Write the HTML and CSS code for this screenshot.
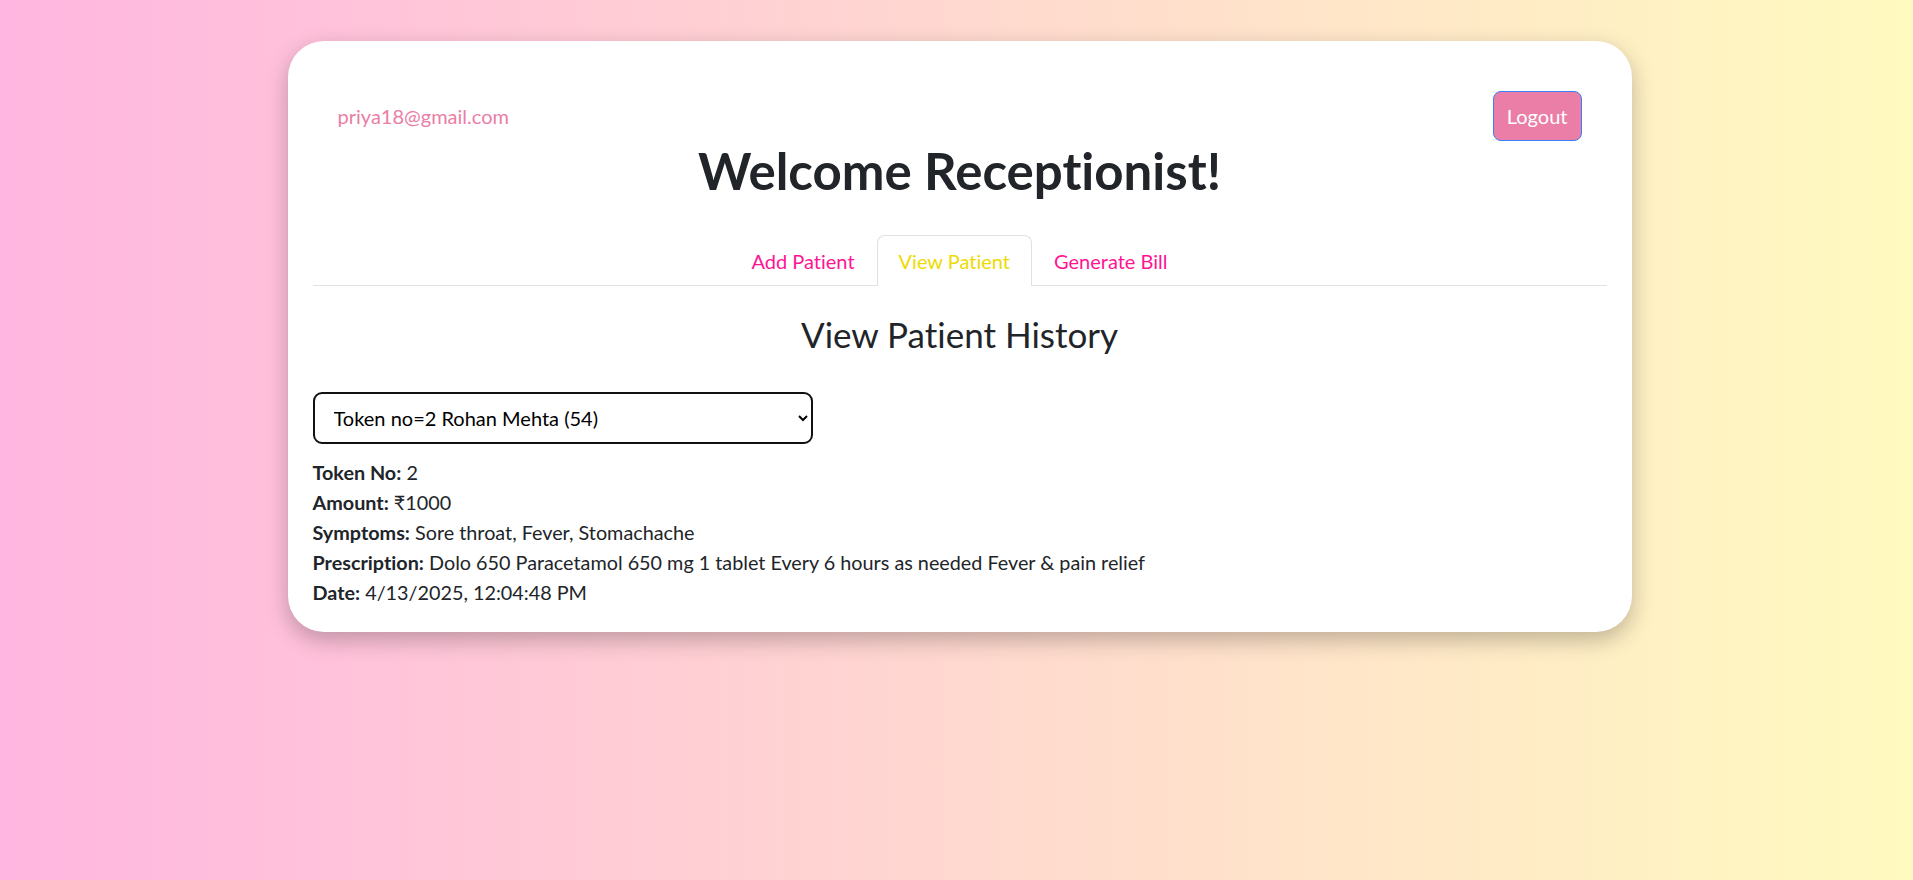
FILE: index.html
```html
<!DOCTYPE html>
<html lang="en">
<head>
<meta charset="utf-8">
<title>Receptionist</title>
<link rel="stylesheet" href="styles.css">
</head>
<body>
<main class="card">
  <header class="topbar">
    <span class="email">priya18@gmail.com</span>
    <button class="logout" type="button">Logout</button>
  </header>
  <h1 class="title">Welcome Receptionist!</h1>
  <nav class="tabs">
    <a class="tab">Add Patient</a>
    <a class="tab active">View Patient</a>
    <a class="tab">Generate Bill</a>
  </nav>
  <section class="history">
    <h3 class="section-title">View Patient History</h3>
    <select class="patient-select">
      <option>Token no=2 Rohan Mehta (54)</option>
    </select>
    <div class="details">
      <div><strong>Token No:</strong> 2</div>
      <div><strong>Amount:</strong> ₹1000</div>
      <div><strong>Symptoms:</strong> Sore throat, Fever, Stomachache</div>
      <div><strong>Prescription:</strong> Dolo 650 Paracetamol 650 mg 1 tablet Every 6 hours as needed Fever &amp; pain relief</div>
      <div><strong>Date:</strong> 4/13/2025, 12:04:48 PM</div>
    </div>
  </section>
</main>
</body>
</html>
```
FILE: styles.css
```css
* { box-sizing: border-box; }
html, body { height: 100%; }
body {
  margin: 0;
  font-family: Lato, "Noto Sans", sans-serif;
  font-size: 20px;
  line-height: 1.5;
  color: #212529;
  font-variant-ligatures: none;
  background: linear-gradient(to right, #ffb6e0, #fffabf);
}
.card {
  width: 1344px;
  margin: 41px 0 0 calc(50% - 669px);
  background: #fff;
  border-radius: 36px;
  padding: 25px;
  box-shadow: 0 8px 22px rgba(0, 0, 0, 0.25);
}
.topbar {
  display: flex;
  justify-content: space-between;
  align-items: center;
  padding: 25px 25px 0;
}
.email { color: #ea7ea6; }
.logout {
  font-family: inherit;
  font-size: 20px;
  line-height: 30px;
  color: #fff;
  background: #ea7ea6;
  border: 1.5px solid #3b7ef6;
  border-radius: 8px;
  padding: 9px 13px;
  font-variant-ligatures: none;
}
.title {
  margin: 0 0 34px;
  text-align: center;
  font-size: 51px;
  font-weight: 700;
  line-height: 60px;
}
.tabs {
  display: flex;
  justify-content: center;
  border-bottom: 1.5px solid #dee2e6;
}
.tab {
  padding: 10px 21px;
  color: #ff1493;
  border: 1.5px solid transparent;
  border-bottom: none;
  border-radius: 8px 8px 0 0;
  margin-bottom: -1.5px;
  line-height: 30px;
}
.tab.active {
  color: #eedb00;
  background: #fff;
  border-color: #dee2e6;
}
.section-title {
  margin: 27px 0 0;
  text-align: center;
  font-size: 35px;
  font-weight: 400;
  line-height: 42px;
}
.patient-select {
  display: block;
  width: 500px;
  height: 52px;
  margin: 37px 0 13px;
  padding: 0 12px 0 15px;
  font-family: inherit;
  font-size: 20px;
  color: #000;
  background: #fff;
  border: 2px solid #111;
  border-radius: 9px;
}
.details {
  font-size: 19.8px;
  line-height: 30px;
}
.details strong { font-weight: 700; }
```
